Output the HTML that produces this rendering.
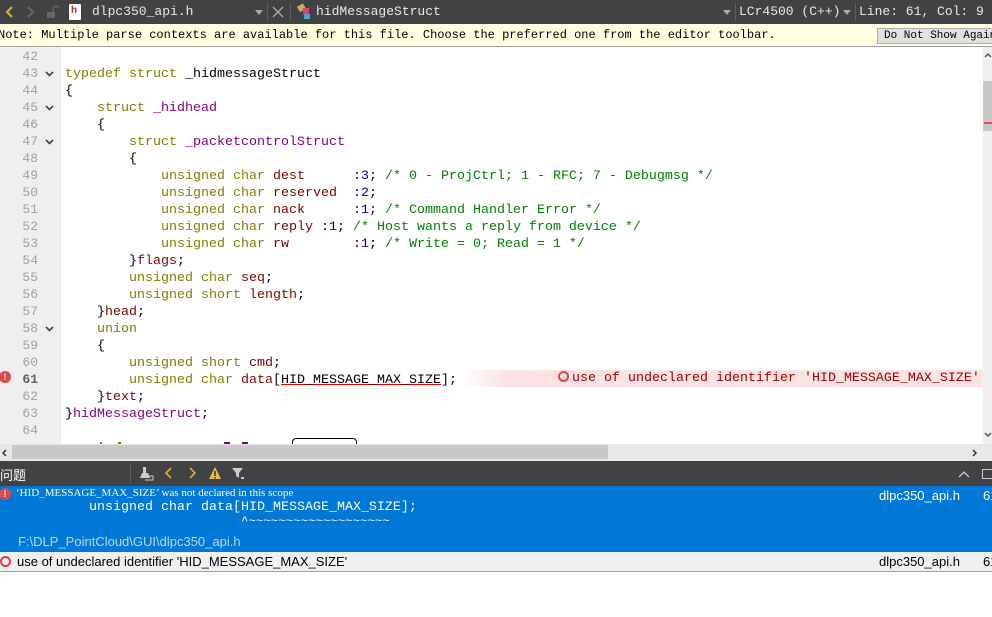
<!DOCTYPE html>
<html><head><meta charset="utf-8"><style>
*{margin:0;padding:0;box-sizing:border-box}
body{width:992px;height:617px;overflow:hidden;background:#fff;position:relative;font-family:"Liberation Sans","Noto Sans CJK SC",sans-serif}
.abs{position:absolute}
.mono{font-family:"Liberation Mono","DejaVu Sans Mono",monospace}
#tb{left:0;top:0;width:992px;height:24px;background:#404244;color:#e8e8e8}
#tb .t{position:absolute;top:4px;font-size:13px;font-family:"Liberation Mono",monospace;white-space:pre}
.sep{position:absolute;top:3px;width:1px;height:18px;background:#5a5c5e}
.dd{position:absolute;top:10px;width:0;height:0;border-left:4px solid transparent;border-right:4px solid transparent;border-top:5px solid #aaa}
#info{left:0;top:24px;width:992px;height:23px;background:#ffffe1;border-bottom:1px solid #a0a0a0;font-size:12px;color:#000}
.ln{position:absolute;left:0;width:38px;text-align:right;font-size:13px;color:#a0a0a0;font-family:"Liberation Mono",monospace}
.fold{position:absolute;left:45px;width:9px;height:6px}
#code{left:65px;top:49px;font-size:13.33px;line-height:17px;white-space:pre;color:#000}
.k{color:#808000}.f{color:#800000}.p{color:#800080}.n{color:#000080}.c{color:#008000}
#vs{left:983px;top:47px;width:9px;height:397px;background:#efefef}
#hs{left:0;top:444px;width:992px;height:17px;background:#e8e8e8}
#ph{left:0;top:461px;width:992px;height:25px;background:#404244;color:#fff}
#sel{left:0;top:486px;width:992px;height:66px;background:#0078d7;color:#fff}
#row2{left:0;top:552px;width:992px;height:20px;background:#f0f0f0;border-bottom:1px solid #a0a0a0;font-size:13px}
</style></head><body>
<div id="tb" class="abs">
  <svg class="abs" style="left:5px;top:5px" width="10" height="14"><path d="M7 2 L2 7 L7 12" stroke="#e0b030" stroke-width="2" fill="none"/></svg>
  <svg class="abs" style="left:25px;top:5px" width="10" height="14"><path d="M3 2 L8 7 L3 12" stroke="#666" stroke-width="2" fill="none"/></svg>
  <svg class="abs" style="left:45px;top:5px" width="14" height="14"><rect x="2" y="7" width="8" height="6" fill="#666"/><path d="M8 7 V4 a3 3 0 0 1 6 0" stroke="#666" stroke-width="1.5" fill="none"/></svg>
  <div class="abs" style="left:69px;top:4px;width:12px;height:16px;background:#fff;border-radius:1px"><span style="position:absolute;left:2px;top:1px;font:bold 10px 'Liberation Sans';color:#c03030">h</span></div>
  <span class="t" style="left:92px">dlpc350_api.h</span>
  <div class="dd" style="left:255px"></div><div class="sep" style="left:267px"></div>
  <svg class="abs" style="left:272px;top:6px" width="12" height="12"><path d="M1 1 L11 11 M11 1 L1 11" stroke="#aaa" stroke-width="1.3"/></svg>
  <div class="sep" style="left:290px"></div>
  <svg class="abs" style="left:296px;top:3px" width="18" height="18"><rect x="2" y="2" width="7" height="6" fill="#c8b060" transform="rotate(-30 5 5)"/><rect x="7" y="5" width="6" height="6" fill="#e04080"/><rect x="8" y="11" width="6" height="5" fill="#40b0c0"/></svg>
  <span class="t" style="left:316px">hidMessageStruct</span>
  <div class="dd" style="left:723px"></div><div class="sep" style="left:735px"></div>
  <span class="t" style="left:739px">LCr4500 (C++)</span>
  <div class="dd" style="left:843px"></div><div class="sep" style="left:855px"></div>
  <span class="t" style="left:859px">Line: 61, Col: 9</span>
</div>
<div id="info" class="abs"><span class="abs mono" style="left:-2px;top:4px;font-size:12px;white-space:pre">Note: Multiple parse contexts are available for this file. Choose the preferred one from the editor toolbar.</span>
<div class="abs mono" style="left:877px;top:4px;width:118px;height:16px;background:#e1e1e1;border:1px solid #adadad;font-size:11px;padding-left:6px;line-height:14px;white-space:nowrap;overflow:hidden">Do Not Show Again</div></div>
<div class="abs" style="left:0;top:47px;width:61px;height:397px;background:#efefef"></div>
<div class="abs" style="left:463px;top:370px;width:520px;height:17px;background:linear-gradient(90deg,rgba(250,220,220,0) 0,#fbe3e3 40px,#fbe3e3 100%)"></div>
<div class="abs mono" style="left:558px;top:370px;font-size:13.33px;line-height:17px;color:#a00000;white-space:pre"><span style="display:inline-block;width:11px;height:11px;border:2px solid #e04040;border-radius:50%;vertical-align:-1px;margin-right:3px"></span>use of undeclared identifier 'HID_MESSAGE_MAX_SIZE'</div>
<div id="code" class="abs mono">
<span class="k">typedef</span> <span class="k">struct</span> _hidmessageStruct
{
    <span class="k">struct</span> <span class="p">_hidhead</span>
    {
        <span class="k">struct</span> <span class="p">_packetcontrolStruct</span>
        {
            <span class="k">unsigned</span> <span class="k">char</span> <span class="f">dest</span>      :<span class="n">3</span>; <span class="c">/* 0 - ProjCtrl; 1 - RFC; 7 - Debugmsg */</span>
            <span class="k">unsigned</span> <span class="k">char</span> <span class="f">reserved</span>  :<span class="n">2</span>;
            <span class="k">unsigned</span> <span class="k">char</span> <span class="f">nack</span>      :<span class="n">1</span>; <span class="c">/* Command Handler Error */</span>
            <span class="k">unsigned</span> <span class="k">char</span> <span class="f">reply</span> :<span class="n">1</span>; <span class="c">/* Host wants a reply from device */</span>
            <span class="k">unsigned</span> <span class="k">char</span> <span class="f">rw</span>        :<span class="n">1</span>; <span class="c">/* Write = 0; Read = 1 */</span>
        }<span class="f">flags</span>;
        <span class="k">unsigned</span> <span class="k">char</span> <span class="f">seq</span>;
        <span class="k">unsigned</span> <span class="k">short</span> <span class="f">length</span>;
    }<span class="f">head</span>;
    <span class="k">union</span>
    {
        <span class="k">unsigned</span> <span class="k">short</span> <span class="f">cmd</span>;
        <span class="k">unsigned</span> <span class="k">char</span> <span class="f">data</span>[<span style="text-decoration:underline;text-decoration-color:#e00000">HID_MESSAGE_MAX_SIZE</span>];
    }<span class="f">text</span>;
}<span class="p">hidMessageStruct</span>;

</div>
<div class="abs" style="left:292px;top:438px;width:65px;height:10px;border:1px solid #000;border-radius:4px 4px 0 0"></div>
<div class="abs" style="left:100px;top:442px;width:2px;height:2px;background:#808000"></div>
<div class="abs" style="left:118px;top:442px;width:3px;height:2px;background:#808000"></div>
<div class="abs" style="left:224px;top:442px;width:6px;height:2px;background:#800080"></div>
<div class="abs" style="left:242px;top:442px;width:6px;height:2px;background:#800080"></div>
<div id="vs" class="abs"><div class="abs" style="left:0;top:34px;width:9px;height:50px;background:#c8c8c8"></div><div class="abs" style="left:1px;top:75px;width:8px;height:2px;background:#e05050"></div>
<svg class="abs" style="left:1px;top:5px" width="8" height="6"><path d="M1 5 L4 2 L7 5" stroke="#555" stroke-width="1.5" fill="none"/></svg>
<svg class="abs" style="left:1px;top:385px" width="8" height="6"><path d="M1 1 L4 4 L7 1" stroke="#555" stroke-width="1.5" fill="none"/></svg></div>
<div id="hs" class="abs"><div class="abs" style="left:12px;top:1px;width:596px;height:14px;background:#c8c8c8"></div>
<svg class="abs" style="left:1px;top:5px" width="6" height="8"><path d="M5 1 L2 4 L5 7" stroke="#333" stroke-width="1.5" fill="none"/></svg>
<svg class="abs" style="left:972px;top:5px" width="6" height="8"><path d="M1 1 L4 4 L1 7" stroke="#333" stroke-width="1.5" fill="none"/></svg></div>
<div id="ph" class="abs">
  <span class="abs" style="left:0;top:4px;font-size:13px">问题</span>
  <div class="abs" style="left:130px;top:3px;width:1px;height:19px;background:#5a5c5e"></div>
  <svg class="abs" style="left:139px;top:5px" width="16" height="16"><rect x="4" y="1" width="3" height="6" fill="#ccc"/><path d="M1 12 L3 7 H9 L11 12 Z" fill="#ccc"/><path d="M9 10 H14 V14 H6" stroke="#ccc" fill="none"/></svg>
  <svg class="abs" style="left:164px;top:5px" width="10" height="14"><path d="M7 2 L2 7 L7 12" stroke="#e0b030" stroke-width="1.6" fill="none"/></svg>
  <svg class="abs" style="left:187px;top:5px" width="10" height="14"><path d="M3 2 L8 7 L3 12" stroke="#e0b030" stroke-width="1.6" fill="none"/></svg>
  <svg class="abs" style="left:208px;top:5px" width="14" height="14"><path d="M7 1 L13 13 H1 Z" fill="#e8c040"/><rect x="6.2" y="5" width="1.6" height="5" fill="#333"/><rect x="6.2" y="11" width="1.6" height="1.5" fill="#333"/></svg>
  <svg class="abs" style="left:231px;top:5px" width="14" height="14"><path d="M1 2 H12 L8 7 V12 L5 10 V7 Z" fill="#ccc"/><rect x="10" y="11" width="3" height="2" fill="#ccc"/></svg>
  <svg class="abs" style="left:958px;top:9px" width="12" height="8"><path d="M1 7 L6 2 L11 7" stroke="#ccc" stroke-width="1.3" fill="none"/></svg>
  <div class="abs" style="left:982px;top:8px;width:12px;height:10px;border:1px solid #ccc"></div>
</div>
<div id="sel" class="abs">
  <div class="abs" style="left:-1px;top:2px;width:12px;height:12px;border-radius:50%;background:#e04848;color:#fff;font:bold 9px 'Liberation Sans';text-align:center;line-height:12px">!</div>
  <span class="abs" style="left:16px;top:1px;font-size:11px;font-family:'Liberation Serif',serif;white-space:pre">‘HID_MESSAGE_MAX_SIZE’ was not declared in this scope</span>
  <span class="abs mono" style="left:89px;top:14px;font-size:13.33px;white-space:pre">unsigned char data[HID_MESSAGE_MAX_SIZE];</span>
  <span class="abs mono" style="left:241px;top:30px;font-size:13.33px;white-space:pre;transform:scale(0.93,0.8);transform-origin:0 0">^~~~~~~~~~~~~~~~~~~~</span>
  <span class="abs" style="left:18px;top:48px;font-size:13px;color:#b8d8f4">F:\DLP_PointCloud\GUI\dlpc350_api.h</span>
  <span class="abs" style="left:879px;top:2px;font-size:13px">dlpc350_api.h</span>
  <span class="abs" style="left:983px;top:2px;font-size:13px">61</span>
</div>
<div id="row2" class="abs">
  <div class="abs" style="left:0;top:4px;width:11px;height:11px;border:2px solid #e04040;border-radius:50%"></div>
  <span class="abs" style="left:17px;top:2px">use of undeclared identifier 'HID_MESSAGE_MAX_SIZE'</span>
  <span class="abs" style="left:879px;top:2px">dlpc350_api.h</span>
  <span class="abs" style="left:983px;top:2px">61</span>
</div>
<div class="abs" style="left:0;top:49px;width:61px;height:395px;overflow:hidden">
<div class="ln" style="top:0">42</div><div class="ln" style="top:17px">43</div><div class="ln" style="top:34px">44</div><div class="ln" style="top:51px">45</div><div class="ln" style="top:68px">46</div><div class="ln" style="top:85px">47</div><div class="ln" style="top:102px">48</div><div class="ln" style="top:119px">49</div><div class="ln" style="top:136px">50</div><div class="ln" style="top:153px">51</div><div class="ln" style="top:170px">52</div><div class="ln" style="top:187px">53</div><div class="ln" style="top:204px">54</div><div class="ln" style="top:221px">55</div><div class="ln" style="top:238px">56</div><div class="ln" style="top:255px">57</div><div class="ln" style="top:272px">58</div><div class="ln" style="top:289px">59</div><div class="ln" style="top:306px">60</div><div class="ln" style="top:323px;color:#606060;font-weight:bold">61</div><div class="ln" style="top:340px">62</div><div class="ln" style="top:357px">63</div><div class="ln" style="top:374px">64</div>
<svg class="fold" style="top:22px"><path d="M1 1 L4.5 4.5 L8 1" stroke="#444" stroke-width="1.6" fill="none"/></svg>
<svg class="fold" style="top:56px"><path d="M1 1 L4.5 4.5 L8 1" stroke="#444" stroke-width="1.6" fill="none"/></svg>
<svg class="fold" style="top:90px"><path d="M1 1 L4.5 4.5 L8 1" stroke="#444" stroke-width="1.6" fill="none"/></svg>
<svg class="fold" style="top:277px"><path d="M1 1 L4.5 4.5 L8 1" stroke="#444" stroke-width="1.6" fill="none"/></svg>
</div>
<div class="abs" style="left:-1px;top:371px;width:12px;height:12px;border-radius:50%;background:#e04848;color:#fff;font:bold 9px 'Liberation Sans';text-align:center;line-height:12px">!</div>
</body></html>
